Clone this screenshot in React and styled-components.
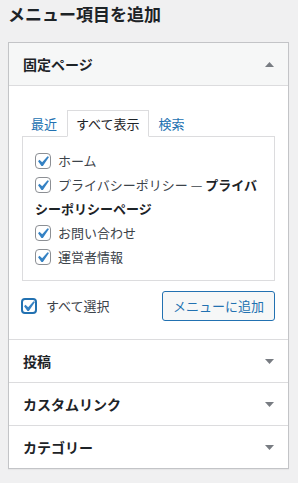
import styled, { createGlobalStyle } from "styled-components";

const GlobalStyle = createGlobalStyle`
  html, body {
    margin: 0;
    padding: 0;
    background: #f0f0f1;
  }
  body {
    font-family: "Noto Sans CJK JP", "Noto Sans", sans-serif;
    font-size: 13px;
    color: #3c434a;
  }
  * {
    box-sizing: border-box;
  }
`;

const CheckMark = () => (
  <CheckSvg viewBox="0 0 20 20">
    <path
      d="M14.83 4.89l1.34.94-5.81 8.38H9.02L5.78 9.67l1.34-1.25 2.57 2.4z"
      fill="#3582c4"
    />
  </CheckSvg>
);

const Arrow = ({ up }) => (
  <ArrowSvg viewBox="0 0 9 5" $up={up}>
    <path d="M0 0h9L4.5 5z" fill="#787c82" />
  </ArrowSvg>
);

const pages = [
  { label: "ホーム" },
  { label: "プライバシーポリシー — ", state: "プライバシーポリシーページ" },
  { label: "お問い合わせ" },
  { label: "運営者情報" },
];

const sections = ["投稿", "カスタムリンク", "カテゴリー"];

export default function App() {
  return (
    <>
      <GlobalStyle />
      <Page>
        <Title>メニュー項目を追加</Title>
        <Panel>
          <SectionHeader $open>
            <span>固定ページ</span>
            <Arrow up />
          </SectionHeader>
          <SectionBody>
            <Tabs>
              <Tab>最近</Tab>
              <Tab $active>すべて表示</Tab>
              <Tab>検索</Tab>
            </Tabs>
            <TabPanel>
              {pages.map((page) => (
                <Item key={page.label}>
                  <Checkbox>
                    <CheckMark />
                  </Checkbox>
                  {page.label}
                  {page.state && <strong>{page.state}</strong>}
                </Item>
              ))}
            </TabPanel>
            <Actions>
              <SelectAll>
                <Checkbox $focus>
                  <CheckMark />
                </Checkbox>
                すべて選択
              </SelectAll>
              <AddButton>メニューに追加</AddButton>
            </Actions>
          </SectionBody>
          {sections.map((name) => (
            <SectionHeader key={name}>
              <span>{name}</span>
              <Arrow />
            </SectionHeader>
          ))}
        </Panel>
      </Page>
    </>
  );
}

const Page = styled.div`
  padding: 2px 9px 14px 8px;
`;

const Title = styled.h2`
  margin: 0 0 16px;
  font-size: 17px;
  line-height: 24px;
  font-weight: 700;
  color: #1d2327;
`;

const Panel = styled.div`
  background: #fff;
  border: 1px solid #c3c4c7;
  box-shadow: 0 1px 1px rgba(0, 0, 0, 0.04);
`;

const SectionHeader = styled.div`
  display: flex;
  align-items: center;
  justify-content: space-between;
  height: 43px;
  padding: 0 14px 0 14px;
  border-top: 1px solid #dcdcde;
  background: ${(p) => (p.$open ? "#f6f7f7" : "#fff")};
  border-bottom: ${(p) => (p.$open ? "1px solid #dcdcde" : "none")};
  font-size: 14px;
  font-weight: 700;
  color: #1d2327;
  line-height: 20px;

  &:first-child {
    border-top: none;
    height: 43px;
  }
`;

const ArrowSvg = styled.svg`
  width: 9px;
  height: 5px;
  transform: ${(p) => (p.$up ? "rotate(180deg)" : "none")};
`;

const SectionBody = styled.div`
  padding: 24px 13px 18px;
`;

const Tabs = styled.ul`
  display: flex;
  gap: 1px;
  list-style: none;
  margin: 0 0 -1px;
  padding: 0;
`;

const Tab = styled.li`
  padding: 4px 8px 3px;
  line-height: 18px;
  border: 1px solid ${(p) => (p.$active ? "#dcdcde" : "transparent")};
  border-bottom-color: ${(p) => (p.$active ? "#fff" : "transparent")};
  background: ${(p) => (p.$active ? "#fff" : "transparent")};
  color: ${(p) => (p.$active ? "#1d2327" : "#2271b1")};
  position: relative;
`;

const TabPanel = styled.ul`
  list-style: none;
  margin: 0;
  padding: 12px 12px 11px;
  border: 1px solid #dcdcde;
`;

const Item = styled.li`
  line-height: 24px;

  strong {
    font-weight: 700;
    color: #1d2327;
  }
`;

const Checkbox = styled.span`
  position: relative;
  display: inline-block;
  width: 16px;
  height: 16px;
  margin: 4px 7px 0 ${(p) => (p.$focus ? "-1px" : "0")};
  vertical-align: top;
  border: ${(p) => (p.$focus ? "2px solid #2271b1" : "1px solid #8c8f94")};
  border-radius: 4px;
  background: #fff;
`;

const CheckSvg = styled.svg`
  position: absolute;
  left: -4px;
  top: -3px;
  width: 21px;
  height: 21px;
`;

const Actions = styled.div`
  display: flex;
  align-items: center;
  justify-content: space-between;
  margin-top: 10px;
`;

const SelectAll = styled.label`
  line-height: 24px;
  color: #3c434a;

  ${Checkbox} {
    margin-right: 9px;
  }

  ${CheckSvg} {
    left: -5px;
    top: -4px;
  }
`;

const AddButton = styled.button`
  height: 30px;
  padding: 0 10px;
  font-family: inherit;
  font-size: 13px;
  line-height: 28px;
  color: #2271b1;
  background: #f6f7f7;
  border: 1px solid #2271b1;
  border-radius: 3px;
`;
